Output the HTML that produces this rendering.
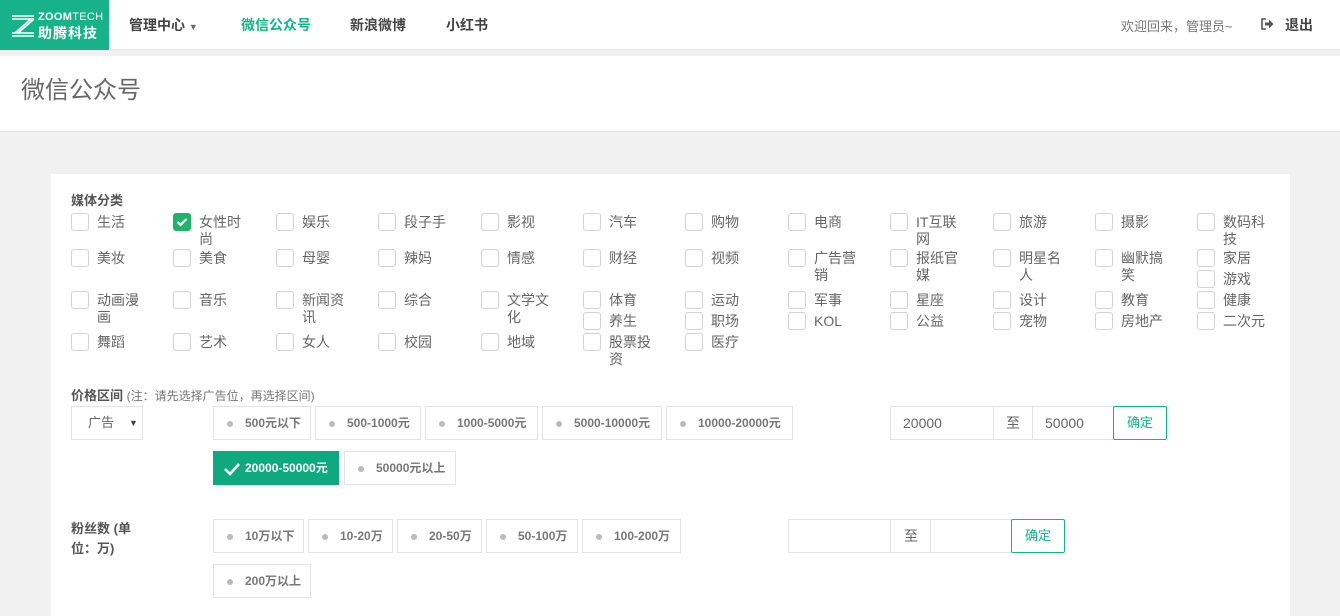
<!DOCTYPE html>
<html><head><meta charset="utf-8"><style>
*{margin:0;padding:0;box-sizing:border-box}
body{width:1340px;height:616px;overflow:hidden;background:#f1f1f1;font-family:"Liberation Sans","Noto Sans CJK SC",sans-serif;color:#555;position:relative}
.abs{position:absolute}
#hd{left:0;top:0;width:1340px;height:50px;background:#fff;border-bottom:1px solid #e6e6e6}
#logo{left:0;top:0;width:109px;height:50px;background:#17b28a;color:#fff}
.nav{top:15px;font-size:14px;font-weight:bold;color:#444}
#tb{left:0;top:56px;width:1340px;height:76px;background:#fff;border-bottom:1px solid #e4e4e4}
#card{left:51px;top:174px;width:1239px;height:442px;background:#fff}
.i{position:absolute;font-size:14px;line-height:17px;color:#666}
.i b{position:absolute;left:0;top:0;width:18px;height:18px;border:1px solid #d2d2d2;border-radius:3px;background:#fff}
.i span{position:absolute;left:26px;top:1px;width:44px;font-weight:normal}
.i b.on{background:#1eb36b;border-color:#1eb36b}
.lbl{font-size:13px;font-weight:bold;color:#555}
.bt{position:absolute;height:34px;border:1px solid #e3e3e3;background:#fff;font-size:12px;font-weight:bold;color:#777;line-height:32px;padding-left:31px}
.bt:before{content:"";position:absolute;left:13px;top:14px;width:6px;height:6px;border-radius:50%;background:#bbb}
.bt.on{background:#0fa97f;border-color:#0fa97f;color:#fff}
.bt.on:before{display:none}
.in{position:absolute;height:34px;border:1px solid #e3e3e3;background:#fff;font-size:14px;color:#666;line-height:32px;padding-left:12px}
.ok{position:absolute;height:34px;border:1px solid #14b38a;border-radius:2px;color:#14b38a;font-size:13px;line-height:32px;text-align:center;background:#fff}
</style></head><body>
<div id="hd" class="abs"></div>
<div id="logo" class="abs">
<svg class="abs" style="left:11px;top:14px" width="24" height="24" viewBox="0 0 24 24"><g stroke="#fff" stroke-width="1.6" fill="none"><path d="M1 2h22M1 5h22M20 5L4 19M23 5L7 19M1 19h22M1 22h22"/></g></svg>
<div class="abs" style="left:38px;top:11px;font-size:11px;font-weight:bold;letter-spacing:0.3px">ZOOM<span style="font-weight:normal">TECH</span></div>
<div class="abs" style="left:38px;top:23px;font-size:14px;font-weight:bold;letter-spacing:1px">助腾科技</div>
</div>
<div class="abs nav" style="left:129px">管理中心 <span style="font-size:9px;color:#666">▼</span></div>
<div class="abs nav" style="left:241px;color:#14b38a">微信公众号</div>
<div class="abs nav" style="left:350px">新浪微博</div>
<div class="abs nav" style="left:446px">小红书</div>
<div class="abs" style="left:1121px;top:16px;font-size:13px;color:#777">欢迎回来，管理员~</div>
<svg class="abs" style="left:1261px;top:18px" width="13" height="12" viewBox="0 0 13 12"><path d="M5 1H1v10h4" stroke="#555" stroke-width="1.6" fill="none"/><path d="M4 4.5h4V1.5l4.5 4.5L8 10.5V7.5H4z" fill="#555"/></svg>
<div class="abs nav" style="left:1285px;color:#444">退出</div>
<div id="tb" class="abs"><div class="abs" style="left:21px;top:14px;font-size:24px;color:#666">微信公众号</div></div>
<div id="card" class="abs"></div>
<div class="abs lbl" style="left:71px;top:190px">媒体分类</div>

<div class="i" style="left:71px;top:213px"><b></b><span>生活</span></div>
<div class="i" style="left:71px;top:249px"><b></b><span>美妆</span></div>
<div class="i" style="left:71px;top:291px"><b></b><span>动画漫画</span></div>
<div class="i" style="left:71px;top:333px"><b></b><span>舞蹈</span></div>

<div class="i" style="left:173px;top:213px"><b class="on"><svg width="16" height="16" viewBox="0 0 16 16" style="position:absolute;left:0;top:0"><path d="M3.5 8l3 3 6-6" stroke="#fff" stroke-width="2.2" fill="none"/></svg></b><span>女性时尚</span></div>
<div class="i" style="left:173px;top:249px"><b></b><span>美食</span></div>
<div class="i" style="left:173px;top:291px"><b></b><span>音乐</span></div>
<div class="i" style="left:173px;top:333px"><b></b><span>艺术</span></div>

<div class="i" style="left:276px;top:213px"><b></b><span>娱乐</span></div>
<div class="i" style="left:276px;top:249px"><b></b><span>母婴</span></div>
<div class="i" style="left:276px;top:291px"><b></b><span>新闻资讯</span></div>
<div class="i" style="left:276px;top:333px"><b></b><span>女人</span></div>

<div class="i" style="left:378px;top:213px"><b></b><span>段子手</span></div>
<div class="i" style="left:378px;top:249px"><b></b><span>辣妈</span></div>
<div class="i" style="left:378px;top:291px"><b></b><span>综合</span></div>
<div class="i" style="left:378px;top:333px"><b></b><span>校园</span></div>

<div class="i" style="left:481px;top:213px"><b></b><span>影视</span></div>
<div class="i" style="left:481px;top:249px"><b></b><span>情感</span></div>
<div class="i" style="left:481px;top:291px"><b></b><span>文学文化</span></div>
<div class="i" style="left:481px;top:333px"><b></b><span>地域</span></div>

<div class="i" style="left:583px;top:213px"><b></b><span>汽车</span></div>
<div class="i" style="left:583px;top:249px"><b></b><span>财经</span></div>
<div class="i" style="left:583px;top:291px"><b></b><span>体育</span></div>
<div class="i" style="left:583px;top:312px"><b></b><span>养生</span></div>
<div class="i" style="left:583px;top:333px"><b></b><span>股票投资</span></div>

<div class="i" style="left:685px;top:213px"><b></b><span>购物</span></div>
<div class="i" style="left:685px;top:249px"><b></b><span>视频</span></div>
<div class="i" style="left:685px;top:291px"><b></b><span>运动</span></div>
<div class="i" style="left:685px;top:312px"><b></b><span>职场</span></div>
<div class="i" style="left:685px;top:333px"><b></b><span>医疗</span></div>

<div class="i" style="left:788px;top:213px"><b></b><span>电商</span></div>
<div class="i" style="left:788px;top:249px"><b></b><span>广告营销</span></div>
<div class="i" style="left:788px;top:291px"><b></b><span>军事</span></div>
<div class="i" style="left:788px;top:312px"><b></b><span>KOL</span></div>

<div class="i" style="left:890px;top:213px"><b></b><span>IT互联网</span></div>
<div class="i" style="left:890px;top:249px"><b></b><span>报纸官媒</span></div>
<div class="i" style="left:890px;top:291px"><b></b><span>星座</span></div>
<div class="i" style="left:890px;top:312px"><b></b><span>公益</span></div>

<div class="i" style="left:993px;top:213px"><b></b><span>旅游</span></div>
<div class="i" style="left:993px;top:249px"><b></b><span>明星名人</span></div>
<div class="i" style="left:993px;top:291px"><b></b><span>设计</span></div>
<div class="i" style="left:993px;top:312px"><b></b><span>宠物</span></div>

<div class="i" style="left:1095px;top:213px"><b></b><span>摄影</span></div>
<div class="i" style="left:1095px;top:249px"><b></b><span>幽默搞笑</span></div>
<div class="i" style="left:1095px;top:291px"><b></b><span>教育</span></div>
<div class="i" style="left:1095px;top:312px"><b></b><span>房地产</span></div>

<div class="i" style="left:1197px;top:213px"><b></b><span>数码科技</span></div>
<div class="i" style="left:1197px;top:249px"><b></b><span>家居</span></div>
<div class="i" style="left:1197px;top:270px"><b></b><span>游戏</span></div>
<div class="i" style="left:1197px;top:291px"><b></b><span>健康</span></div>
<div class="i" style="left:1197px;top:312px"><b></b><span>二次元</span></div>

<div class="abs lbl" style="left:71px;top:385px">价格区间 <span style="font-weight:normal;font-size:12px;color:#777">(注：请先选择广告位，再选择区间)</span></div>
<div class="in" style="left:71px;top:406px;width:72px;font-size:13px;padding-left:16px">广告 <span style="position:absolute;left:57px;top:0;font-size:9px;color:#444">▼</span></div>
<div class="bt" style="left:213px;top:406px;width:98px">500元以下</div>
<div class="bt" style="left:315px;top:406px;width:106px">500-1000元</div>
<div class="bt" style="left:425px;top:406px;width:113px">1000-5000元</div>
<div class="bt" style="left:542px;top:406px;width:120px">5000-10000元</div>
<div class="bt" style="left:666px;top:406px;width:127px">10000-20000元</div>
<div class="bt on" style="left:213px;top:451px;width:126px">20000-50000元<svg style="position:absolute;left:9px;top:10px" width="18" height="14" viewBox="0 0 18 14"><path d="M2 7l5 5 9-10" stroke="#fff" stroke-width="2.6" fill="none"/></svg></div>
<div class="bt" style="left:344px;top:451px;width:112px">50000元以上</div>
<div class="in" style="left:890px;top:406px;width:104px">20000</div>
<div class="in" style="left:993px;top:406px;width:40px;padding-left:12px">至</div>
<div class="in" style="left:1032px;top:406px;width:82px">50000</div>
<div class="ok" style="left:1113px;top:406px;width:54px">确定</div>

<div class="abs lbl" style="left:71px;top:519px;line-height:20px;width:66px">粉丝数 <span style="font-weight:bold">(单位：万)</span></div>
<div class="bt" style="left:213px;top:519px;width:91px">10万以下</div>
<div class="bt" style="left:308px;top:519px;width:85px">10-20万</div>
<div class="bt" style="left:397px;top:519px;width:85px">20-50万</div>
<div class="bt" style="left:486px;top:519px;width:92px">50-100万</div>
<div class="bt" style="left:582px;top:519px;width:99px">100-200万</div>
<div class="bt" style="left:213px;top:564px;width:98px">200万以上</div>
<div class="in" style="left:788px;top:519px;width:103px"></div>
<div class="in" style="left:890px;top:519px;width:41px;padding-left:13px">至</div>
<div class="in" style="left:930px;top:519px;width:82px"></div>
<div class="ok" style="left:1011px;top:519px;width:54px">确定</div>
</body></html>
